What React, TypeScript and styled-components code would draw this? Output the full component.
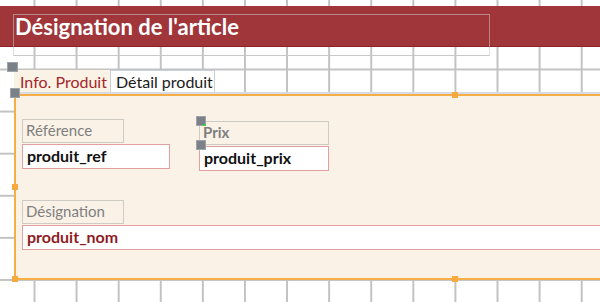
import React from "react";
import styled, { createGlobalStyle } from "styled-components";

const Global = createGlobalStyle`
  html, body { margin: 0; padding: 0; background: #ffffff; }
  body { font-family: Lato, "Open Sans", sans-serif; }
`;

const Canvas = styled.div`
  position: relative;
  width: 600px;
  height: 302px;
  overflow: hidden;
  padding-top: 6px;
  box-sizing: border-box;
  background-color: #ffffff;
  background-image:
    linear-gradient(to right, #c2c2c2 0, #c2c2c2 1.5px, transparent 1.5px),
    linear-gradient(to bottom, #c2c2c2 0, #c2c2c2 1.5px, transparent 1.5px);
  background-size: 42.1px 42.1px;
  background-position: 33.5px 68.5px;
`;

const HeaderBand = styled.div`
  height: 41px;
  box-sizing: border-box;
  background: #a0363a;
  border-bottom: 1px solid #8e2226;
  padding: 8px 0 0 13px;
`;

const TitleLabel = styled.div`
  width: 477px;
  height: 42px;
  box-sizing: border-box;
  border: 1.5px solid rgba(200, 200, 200, 0.55);
  border-bottom-color: #c8c8c8;
  color: #ffffff;
  font-family: Lato, "Open Sans", sans-serif;
  font-weight: 700;
  font-size: 22px;
  line-height: 22px;
  padding: 1px 0 0 1px;
  position: relative;
  z-index: 1;
`;

const TabStrip = styled.div`
  display: flex;
  margin: 23px 0 0 14px;
  height: 22px;
`;

const Tab = styled.div<{ $active?: boolean; $width: number }>`
  height: 22px;
  box-sizing: border-box;
  width: ${(p) => p.$width}px;
  padding-left: ${(p) => (p.$active ? 5 : 5)}px;
  font-family: Lato, "Open Sans", sans-serif;
  font-size: 16px;
  line-height: 21px;
  white-space: nowrap;
  background: ${(p) => (p.$active ? "#fbf2e6" : "#ffffff")};
  color: ${(p) => (p.$active ? "#a3262a" : "#1a1a1a")};
  border: 1px solid ${(p) => (p.$active ? "#fbf2e6" : "#c9d0da")};
  border-bottom: none;
`;

const TabLine = styled.div`
  margin-left: 14px;
  height: 2px;
  background: #d6dce4;
`;

const Panel = styled.div`
  margin-left: 14px;
  height: 186px;
  box-sizing: border-box;
  background: #faf2e7;
  border: 2px solid #f7ae46;
  border-right: none;
  padding: 23px 0 0 6px;
  display: flex;
  flex-direction: column;
  gap: 29px;
`;

const FieldRow = styled.div`
  display: flex;
  align-items: flex-start;
  gap: 29px;
`;

const Field = styled.div<{ $width: number; $offset?: number; $grow?: boolean }>`
  position: relative;
  display: flex;
  flex-direction: column;
  width: ${(p) => (p.$grow ? "auto" : `${p.$width}px`)};
  flex: ${(p) => (p.$grow ? "1" : "none")};
  margin-top: ${(p) => p.$offset ?? 0}px;
`;

const Label = styled.div<{ $width: number; $bold?: boolean }>`
  width: ${(p) => p.$width}px;
  height: 24px;
  box-sizing: border-box;
  border: 1.5px solid #cdcbc4;
  color: #7f7f7f;
  font-family: Lato, "Open Sans", sans-serif;
  font-size: 15px;
  font-weight: ${(p) => (p.$bold ? 700 : 400)};
  line-height: 21px;
  padding-left: 3px;
`;

const TextBox = styled.div<{ $accent?: boolean; $open?: boolean }>`
  height: 25px;
  box-sizing: border-box;
  margin-top: 1px;
  background: #ffffff;
  border: 1.5px solid #e2a0a0;
  border-right-width: ${(p) => (p.$open ? 0 : 1.5)}px;
  color: ${(p) => (p.$accent ? "#8e1c1f" : "#111111")};
  font-family: Lato, "Open Sans", sans-serif;
  font-size: 16px;
  font-weight: 700;
  line-height: 22px;
  padding-left: 4px;
`;

const GreyHandle = styled.div<{ $x: number; $y: number; $w?: number; $h?: number }>`
  position: absolute;
  left: ${(p) => p.$x}px;
  top: ${(p) => p.$y}px;
  width: ${(p) => p.$w ?? 10}px;
  height: ${(p) => p.$h ?? 10}px;
  box-sizing: border-box;
  background: #7c8089;
  border: 1px solid #9ea2a9;
  z-index: 3;
`;

const OrangeHandle = styled.div<{ $x: number; $y: number }>`
  position: absolute;
  left: ${(p) => p.$x}px;
  top: ${(p) => p.$y}px;
  width: 6px;
  height: 6px;
  background: #f7a93d;
  z-index: 3;
`;

const GreenTick = styled.div`
  position: absolute;
  left: 4px;
  top: 3px;
  width: 3px;
  height: 2px;
  background: #32d13a;
  z-index: 4;
`;

export default function App() {
  return (
    <>
      <Global />
      <Canvas>
        <HeaderBand>
          <TitleLabel>Désignation de l'article</TitleLabel>
        </HeaderBand>
        <TabStrip>
          <Tab $active $width={96}>Info. Produit</Tab>
          <Tab $width={105}>Détail produit</Tab>
        </TabStrip>
        <TabLine />
        <Panel>
          <FieldRow>
            <Field $width={148}>
              <Label $width={102}>Référence</Label>
              <TextBox>produit_ref</TextBox>
            </Field>
            <Field $width={130} $offset={2}>
              <GreyHandle $x={-3} $y={-5} />
              <GreenTick />
              <GreyHandle $x={-3} $y={19} />
              <Label $width={130} $bold>Prix</Label>
              <TextBox>produit_prix</TextBox>
            </Field>
          </FieldRow>
          <FieldRow>
            <Field $width={0} $grow>
              <Label $width={102}>Désignation</Label>
              <TextBox $accent $open>produit_nom</TextBox>
            </Field>
          </FieldRow>
        </Panel>
        <GreyHandle $x={7} $y={62} $w={11} $h={10} />
        <GreyHandle $x={10} $y={88} />
        <OrangeHandle $x={452} $y={92} />
        <OrangeHandle $x={12} $y={184} />
        <OrangeHandle $x={12} $y={276} />
        <OrangeHandle $x={452} $y={276} />
      </Canvas>
    </>
  );
}
